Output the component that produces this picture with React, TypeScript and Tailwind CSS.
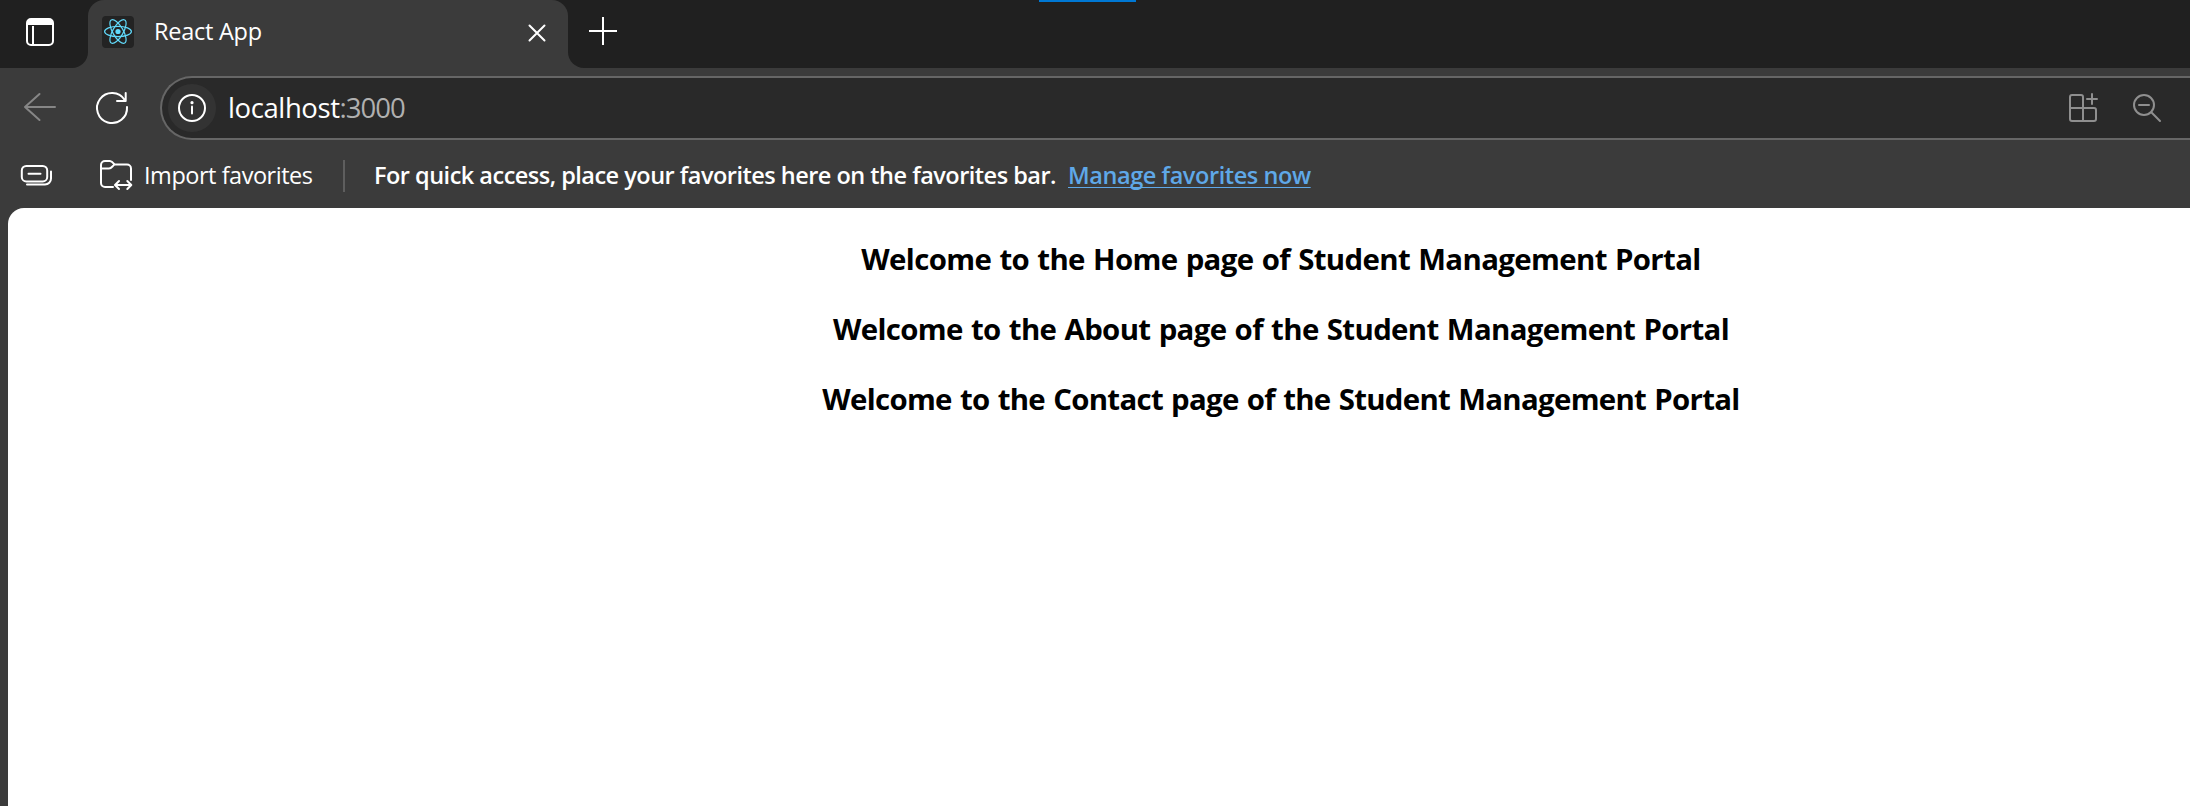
import type { ReactNode } from 'react';

type IconProps = { box: string; className: string; children: ReactNode };

function Icon({ box, className, children }: IconProps) {
  return (
    <svg viewBox={box} className={`shrink-0 ${className}`} fill="none" stroke="currentColor" strokeWidth={2} strokeLinecap="round" strokeLinejoin="round">
      {children}
    </svg>
  );
}

function TabStrip() {
  return (
    <header className="flex h-[68px] bg-[#3b3b3b]">
      <div className="h-[68px] w-[88px] shrink-0 rounded-br-2xl bg-[#202020] pt-4 pl-6">
        <Icon box="0 0 32 32" className="size-8 text-white">
          <rect x="3" y="3" width="26" height="26" rx="4" />
          <path d="M3 9V7a4 4 0 0 1 4-4h18a4 4 0 0 1 4 4v2z" fill="currentColor" stroke="none" />
          <path d="M9 10v18" strokeLinecap="butt" />
        </Icon>
      </div>
      <div className="w-[480px] shrink-0 bg-[#202020]">
        <div className="flex h-[68px] rounded-t-2xl bg-[#3b3b3b] pl-[14px]">
          <div className="mt-4 size-8 rounded bg-[#232323]">
            <Icon box="0 0 32 32" className="size-8 text-[#61dafb]">
              <circle cx="16" cy="15.5" r="2.6" fill="currentColor" stroke="none" />
              <g strokeWidth={1.2}>
                <ellipse cx="16" cy="15.5" rx="13.4" ry="5.2" />
                <ellipse cx="16" cy="15.5" rx="13.4" ry="5.2" transform="rotate(60 16 15.5)" />
                <ellipse cx="16" cy="15.5" rx="13.4" ry="5.2" transform="rotate(120 16 15.5)" />
              </g>
            </Icon>
          </div>
          <span className="mt-[15px] ml-5 w-[371px] text-[23.5px]/[32px] tracking-[-0.25px] text-white">React App</span>
          <Icon box="0 0 24 24" className="mt-[21px] size-6 text-white">
            <path d="M4.5 4.5l15 15M19.5 4.5l-15 15" />
          </Icon>
        </div>
      </div>
      <div className="flex-1 rounded-bl-2xl bg-[#202020] pt-[15px] pl-[19px]">
        <Icon box="0 0 32 32" className="size-8 text-white">
          <path d="M2 16h28M16 2v28" strokeLinecap="butt" />
        </Icon>
      </div>
    </header>
  );
}

function AddressRow() {
  return (
    <div className="flex h-[76px] items-center pt-1">
      <Icon box="20 88 40 40" className="ml-5 size-10 text-[#868686]">
        <path d="M55 107H25M39.5 94L25 107l14.5 13" />
      </Icon>
      <Icon box="92 88 40 40" className="ml-8 size-10 text-white">
        <path d="M127 107A15 15 0 1 1 124.7 100M125.7 93v8H117" />
      </Icon>
      <div className="ml-[28px] flex h-16 flex-1 items-center rounded-l-full border-2 border-r-0 border-[#666666] bg-[#292929] pl-1.5">
        <div className="size-12 rounded-full bg-[#333333]">
          <Icon box="0 0 48 48" className="size-12 text-white">
            <circle cx="24" cy="24" r="13" />
            <path d="M24 22.5v7" />
            <circle cx="24" cy="18.7" r="1.6" fill="currentColor" stroke="none" />
          </Icon>
        </div>
        <div className="ml-3 flex-1 text-[27.5px]/[36px] whitespace-nowrap">
          <span className="tracking-[-0.4px] text-white">localhost</span>
          <span className="tracking-[-1px] text-[#b0b0b0]">:3000</span>
        </div>
        <Icon box="2064 88 40 40" className="size-10 text-[#8f8f8f]">
          <path d="M2083 108V97a2 2 0 0 0-2-2h-9a2 2 0 0 0-2 2v22a2 2 0 0 0 2 2h22a2 2 0 0 0 2-2v-9a2 2 0 0 0-2-2h-24M2083 108v13M2092 94v10M2087 99h10" />
        </Icon>
        <Icon box="2128 88 40 40" className="mr-[22px] ml-6 size-10 text-[#8f8f8f]">
          <circle cx="2144" cy="105" r="10" />
          <path d="M2139 105h10M2151.3 112.3L2160 121" />
        </Icon>
      </div>
    </div>
  );
}

function FavoritesBar() {
  return (
    <div className="flex h-16 shrink-0 items-center text-[23.5px]/[32px] whitespace-nowrap text-white">
      <Icon box="16 156 40 40" className="ml-4 size-10">
        <rect x="21.8" y="166" width="25.4" height="15.4" rx="4.5" />
        <path d="M28.5 173.7h12M51 171.5v7a6 6 0 0 1-6 6H27" />
      </Icon>
      <Icon box="96 156 40 40" className="ml-10 size-10">
        <path d="M113 187h-8a4 4 0 0 1-4-4v-18a4 4 0 0 1 4-4h5c2 0 3 1.5 4.5 3.5H127a4 4 0 0 1 4 4V180M101 168.4h8c2.5 0 3-2 5.5-3.9" />
        <path d="M115.5 185h15.5M119 181l-4 4 4 4M127.3 181l4 4-4 4" />
      </Icon>
      <span className="mb-0.5 ml-2 w-[199px] tracking-[-0.47px]">Import favorites</span>
      <div className="h-8 w-0.5 bg-[#5e5e5e]" />
      <span className="mb-0.5 ml-[29px] w-[694px] font-semibold tracking-[-0.51px]">
        For quick access, place your favorites here on the favorites bar.
      </span>
      <a className="mb-0.5 font-semibold tracking-[-0.42px] text-[#5fa8e8] underline decoration-1 underline-offset-[3px] [text-decoration-skip-ink:none]">
        Manage favorites now
      </a>
    </div>
  );
}

function Page() {
  return (
    <main className="ml-2 flex-1 rounded-tl-2xl bg-white">
      <div className="-mr-[364px] flex flex-col items-center gap-[30px] pt-[31px] text-[29.4px]/[40px] font-bold text-black [word-spacing:1.2px]">
        <h2 className="tracking-[-0.63px]">Welcome to the Home page of Student Management Portal</h2>
        <h2 className="tracking-[-0.64px]">Welcome to the About page of the Student Management Portal</h2>
        <h2 className="tracking-[-0.69px]">Welcome to the Contact page of the Student Management Portal</h2>
      </div>
    </main>
  );
}

export default function App() {
  return (
    <div className="relative flex h-[806px] w-[2190px] flex-col overflow-hidden bg-[#3b3b3b] font-['Open_Sans','Noto_Sans',sans-serif]">
      <TabStrip />
      <div className="absolute top-0 left-[1039px] h-0.5 w-[97px] bg-[#0078d4]" />
      <AddressRow />
      <FavoritesBar />
      <Page />
    </div>
  );
}
